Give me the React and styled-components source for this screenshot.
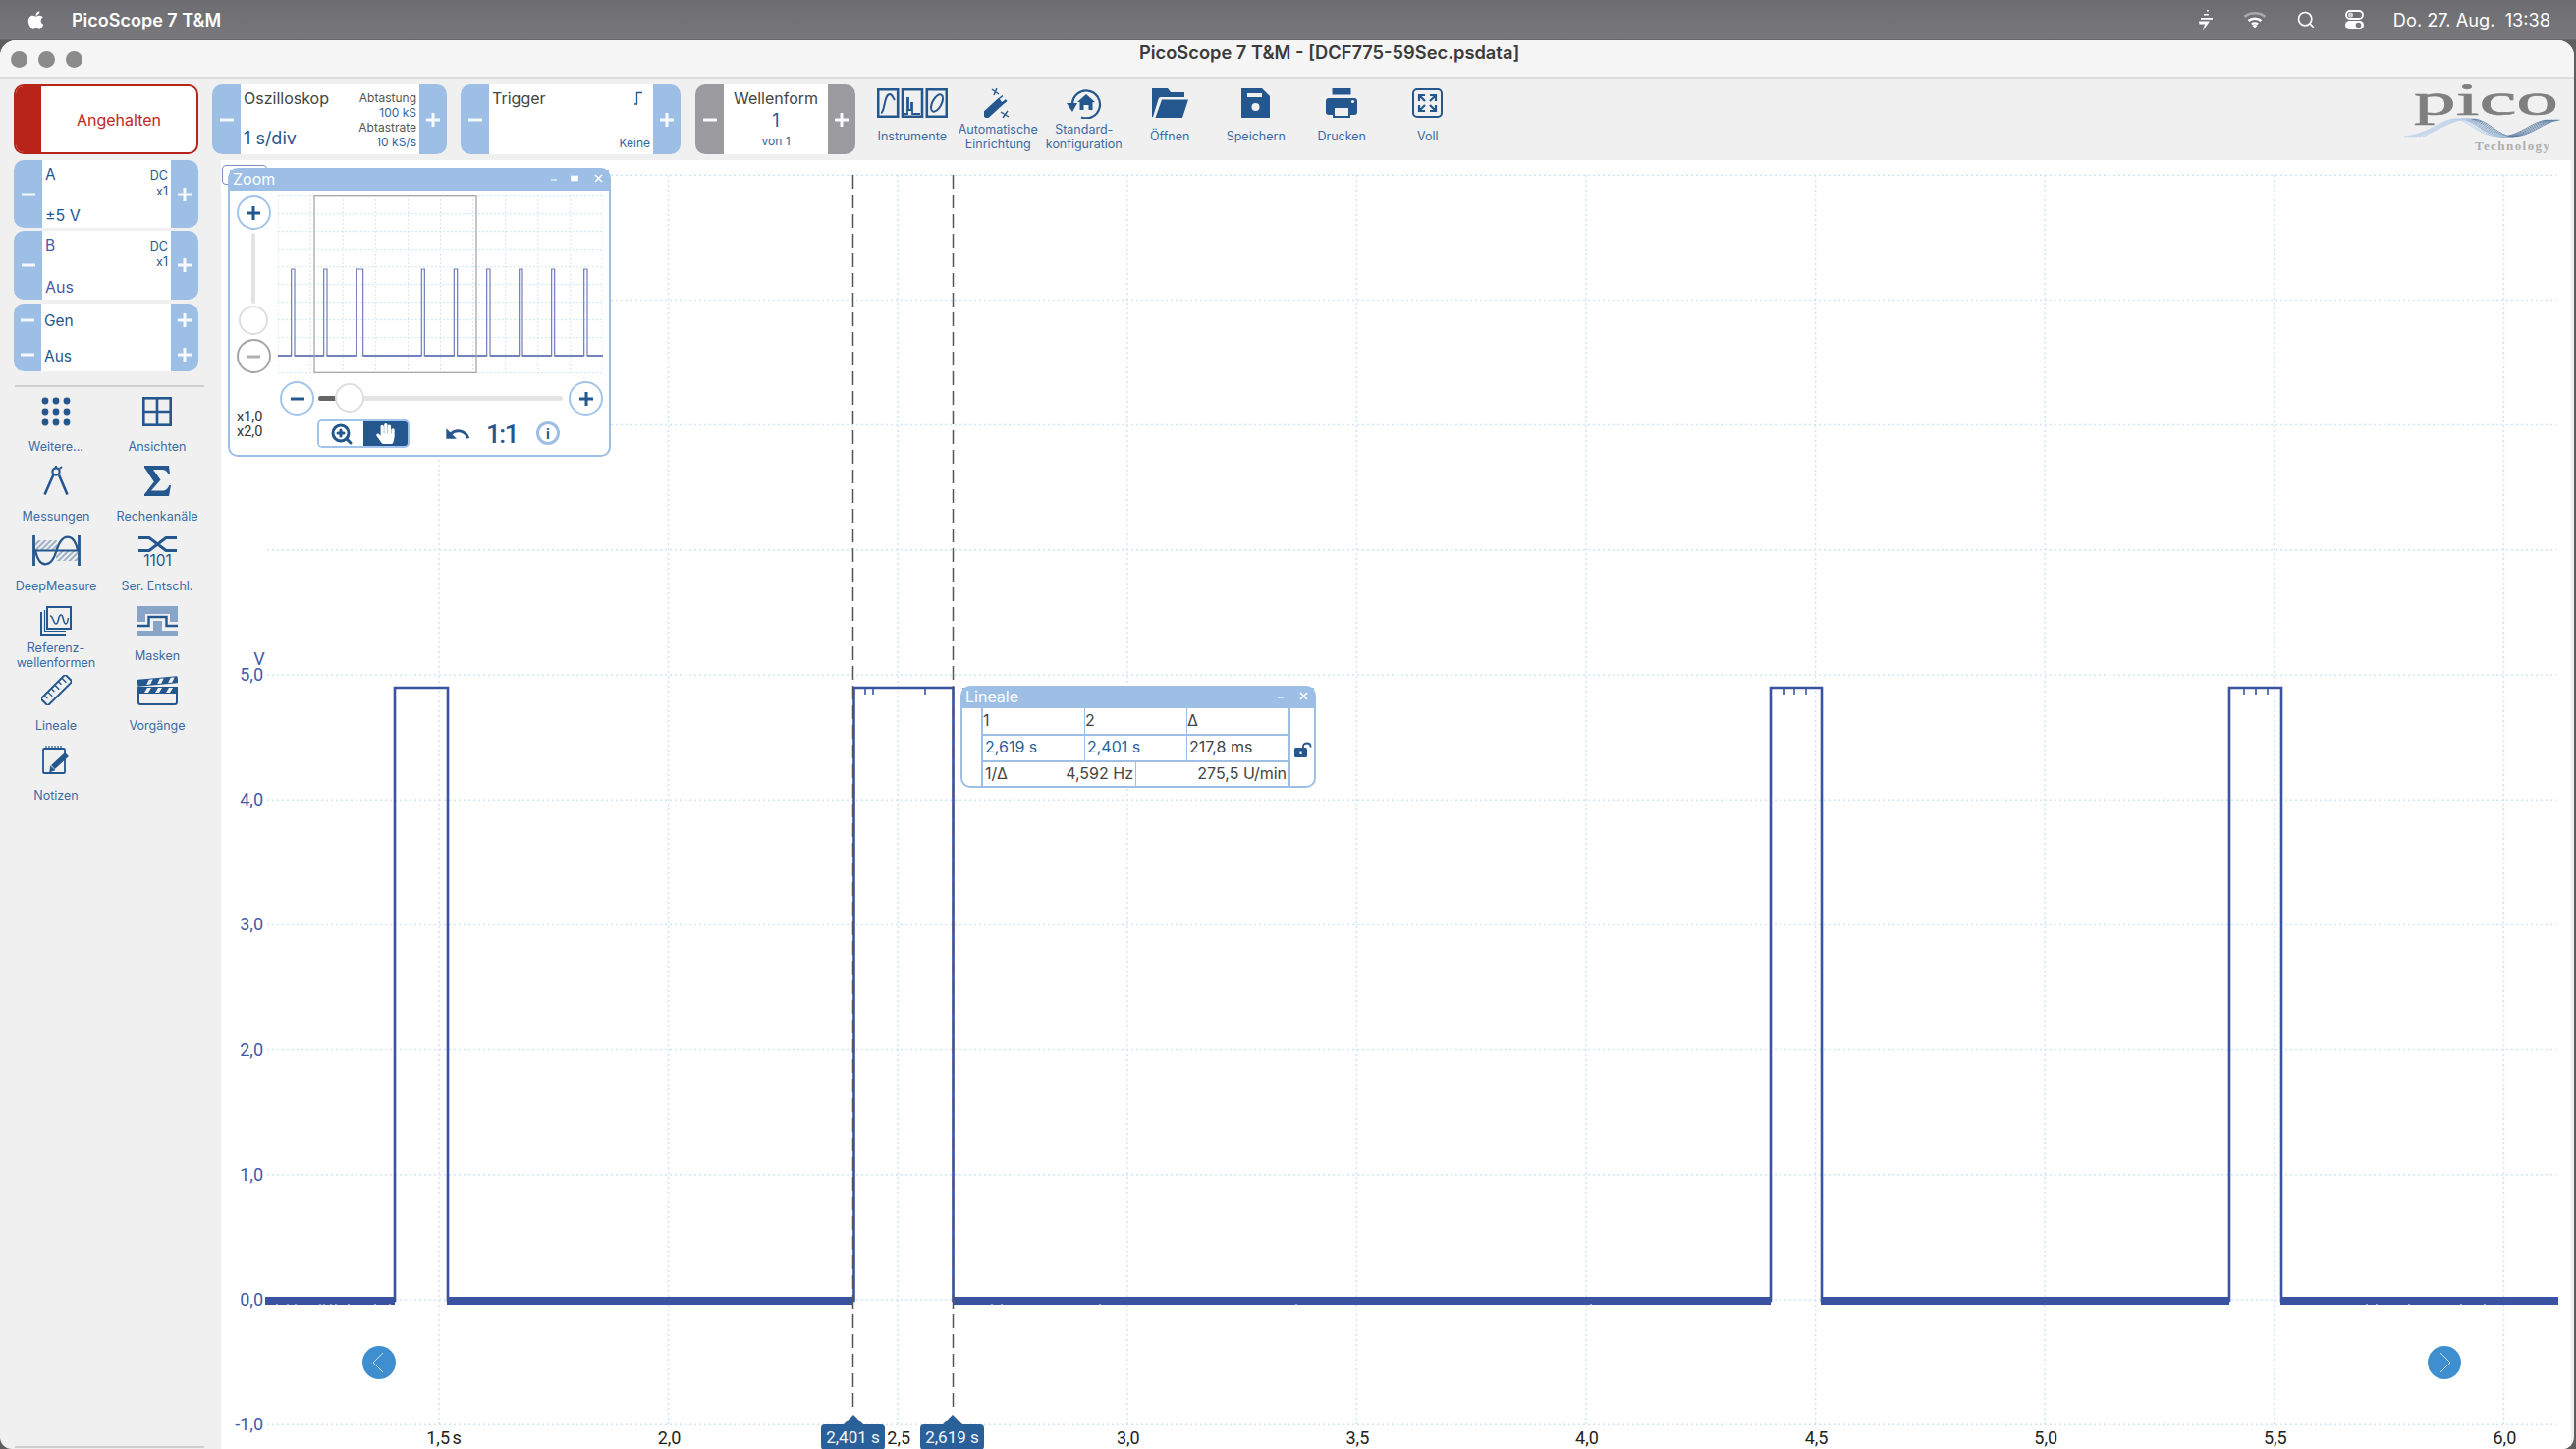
import styled, { createGlobalStyle } from 'styled-components';
import { FaApple, FaHandPaper } from 'react-icons/fa';
import { MdUndo } from 'react-icons/md';
import { Search, ZoomIn } from 'lucide-react';

const INK = '#25578f';

const Global = createGlobalStyle`
   html, body { margin: 0; padding: 0; background: #6c6c70; overflow: hidden; }
   * { box-sizing: border-box; }
   body { font-family: Inter, "Liberation Sans", sans-serif; }
`;

/* icons */

const IconSvg = styled.svg`
   display: block;
   overflow: visible;
`;

const IconInstruments = () => (
   <svg width="72" height="30" viewBox="0 0 72 30" fill="none" stroke={INK}>
      <rect x="1.2" y="1.2" width="20" height="27.6" strokeWidth="2.6" />
      <path d="M4 25C8 25 7 6 13 6 16 6 16 10 18 12" strokeWidth="2" />
      <rect x="26" y="1.2" width="20" height="27.6" strokeWidth="2.6" />
      <path d="M28 26H31V10H32V22H35V15H36V26H44" strokeWidth="1.8" />
      <rect x="50.8" y="1.2" width="20" height="27.6" strokeWidth="2.6" />
      <ellipse cx="61" cy="15" rx="4.6" ry="9.5" transform="rotate(28 61 15)" strokeWidth="2" />
   </svg>
);

const IconWand = () => (
   <svg width="28" height="30" viewBox="0 0 28 30" fill="none" stroke={INK}>
      <path d="M3 26L15 15" strokeWidth="8" strokeLinecap="round" />
      <path d="M15 15L21 10" strokeWidth="8" />
      <path d="M17 12.5L21.5 9" strokeWidth="4" stroke="#f0f0f0" />
      <path d="M8 1L15 6M13 0L10 7M17 24L25 29M24 23L19 30" strokeWidth="1.4" />
   </svg>
);

const IconHomeReset = () => (
   <svg width="36" height="31" viewBox="0 0 36 31" fill="none">
      <path d="M15 29.5A14 14 0 1 0 6 16" stroke={INK} strokeWidth="2.2" />
      <path d="M0 15H11L6 24Z" fill={INK} />
      <path d="M20 6L29 14H26.5V22H22.5V17H17.5V22H13.5V14H11Z" fill={INK} />
   </svg>
);

const IconFolder = () => (
   <svg width="37" height="30" viewBox="0 0 37 30" fill={INK}>
      <path d="M0 0H16L19 4H33V9H9C7.5 9 7 10 6.5 11L1 29H0Z" />
      <path d="M10 11.5H37L31 30H3.5Z" />
   </svg>
);

const IconSave = () => (
   <svg width="29" height="30" viewBox="0 0 29 30">
      <path d="M0 0H21L29 8V30H0Z" fill={INK} />
      <rect x="6" y="5" width="15" height="4" fill="#f0f0f0" />
      <circle cx="14.5" cy="19" r="4" fill="#f0f0f0" />
   </svg>
);

const IconPrint = () => (
   <svg width="32" height="30" viewBox="0 0 32 30">
      <rect x="6.5" width="19" height="6.5" fill={INK} />
      <rect y="10" width="32" height="17" rx="3" fill={INK} />
      <rect x="8" y="19" width="16" height="10" fill="#f0f0f0" stroke={INK} strokeWidth="2" />
      <circle cx="27.5" cy="13.5" r="1.6" fill="#f0f0f0" />
   </svg>
);

const IconFull = () => (
   <svg width="31" height="30" viewBox="0 0 31 30" fill="none" stroke={INK}>
      <rect x="1" y="1" width="29" height="28" rx="4" strokeWidth="2" />
      <path d="M7 13V7H13M7 7L13 13M18 7H24V13M24 7L18 13M7 17V23H13M7 23L13 17M24 17V23H18M24 23L18 17" strokeWidth="2.2" />
   </svg>
);

const IconDots = () => (
   <svg width="30" height="30" viewBox="0 0 30 30" fill={INK}>
      {[4, 15, 26].map(y => [4, 15, 26].map(x => <circle key={`${x}-${y}`} cx={x} cy={y} r="3.4" />))}
   </svg>
);

const IconViews = () => (
   <svg width="30" height="30" viewBox="0 0 30 30" fill="none" stroke={INK} strokeWidth="2.6">
      <rect x="1.3" y="1.3" width="27.4" height="27.4" />
      <path d="M15 1V29M1 15H29" />
   </svg>
);

const IconCompass = () => (
   <svg width="26" height="31" viewBox="0 0 26 31" fill="none" stroke={INK}>
      <circle cx="13" cy="6" r="3.6" strokeWidth="2.2" />
      <path d="M13 0V3M16.5 3L19 1" strokeWidth="2" />
      <path d="M10.5 9L1.5 29.5M16 9.5L24.5 29.5" strokeWidth="2.6" />
   </svg>
);

const IconSigma = () => (
   <svg width="27" height="31" viewBox="0 0 27 31" fill={INK}>
      <path d="M0 0H25L26 9H24.5C23 5 21 4 17 4H9L16.5 14.5L7 25.5H18C22 25.5 24 23.5 25.3 20H27L25 31H0V29.2L9.8 16.4L0 1.8Z" />
   </svg>
);

const IconDeep = () => (
   <svg width="49" height="31" viewBox="0 0 49 31" fill="none">
      <defs>
         <pattern id="hatch" width="4" height="4" patternUnits="userSpaceOnUse" patternTransform="rotate(45)">
            <rect width="2" height="4" fill="#9fb0c6" />
         </pattern>
      </defs>
      <rect x="3" y="5" width="22" height="10" fill="url(#hatch)" />
      <rect x="24" y="16" width="22" height="10" fill="url(#hatch)" />
      <path d="M1.5 0V31M47.5 0V31" stroke={INK} strokeWidth="2.8" />
      <path d="M2 15.5H47" stroke={INK} strokeWidth="2" />
      <path d="M3 15C7 34 19 34 24.5 15.5S42 -3 46 15" stroke={INK} strokeWidth="2.2" />
   </svg>
);

const IconDecode = () => (
   <IconSvg width="39" height="31" viewBox="0 0 39 31" fill="none">
      <path d="M0 2.5H11L28 15.5H39M0 15.5H11L28 2.5H39" stroke={INK} strokeWidth="3" />
      <text x="19.5" y="31" textAnchor="middle" fontFamily="Inter" fontSize="15.5" fill={INK}>1101</text>
   </IconSvg>
);

const IconRefs = () => (
   <svg width="32" height="30" viewBox="0 0 32 30" fill="none" stroke={INK}>
      <rect x="7" y="1" width="24" height="22" strokeWidth="2" />
      <path d="M1 6V29H26" strokeWidth="2" />
      <path d="M4.5 4V25.5H26" strokeWidth="1.2" />
      <path d="M10 10C13 9 13 18 16 18 19 18 18 9 21 9 24 9 23 18 26 18 27.5 18 28 15 28.5 12" strokeWidth="1.5" />
   </svg>
);

const IconMask = () => (
   <svg width="41" height="30" viewBox="0 0 41 30" fill="none">
      <path d="M0 0H41V16H33V8H8V16H0Z" fill="#88a5c8" />
      <path d="M0 25H16V15H25V25H41V30H0Z" fill="#88a5c8" />
      <path d="M0 20H11.5V11H29.5V20H41" stroke={INK} strokeWidth="2.4" />
      <path d="M0 23H14V14H27V23H41" stroke="#f0f0f0" strokeWidth="1" />
   </svg>
);

const IconRuler = () => (
   <svg width="31" height="31" viewBox="0 0 31 31" fill="none" stroke={INK}>
      <g transform="rotate(-45 15.5 15.5)">
         <rect x="-2" y="10.5" width="35" height="10" strokeWidth="2" />
         <path d="M3 11V15M8 11V17M13 11V15M18 11V17M23 11V15M28 11V17" strokeWidth="1.4" />
      </g>
   </svg>
);

const IconClapper = () => (
   <svg width="41" height="30" viewBox="0 0 41 30">
      <g transform="rotate(-5 20 6)">
         <rect x="0" y="2" width="41" height="7" rx="1" fill={INK} />
         <path d="M9 8L12 3H16L13 8ZM20 8L23 3H27L24 8ZM31 8L34 3H38L35 8Z" fill="#f0f0f0" />
      </g>
      <rect x="1" y="12" width="39" height="17" rx="2" fill="#f0f0f0" stroke={INK} strokeWidth="2" />
      <rect y="11" width="41" height="7" fill={INK} />
      <path d="M7 17L10 12H14L11 17ZM18 17L21 12H25L22 17ZM29 17L32 12H36L33 17Z" fill="#f0f0f0" />
   </svg>
);

const IconNotes = () => (
   <svg width="28" height="30" viewBox="0 0 28 30" fill="none" stroke={INK}>
      <rect x="1" y="3" width="22" height="25" rx="1" strokeWidth="1.8" />
      <path d="M4 0V3.5M7 0V3.5M10 0V3.5M13 0V3.5M16 0V3.5M19 0V3.5" strokeWidth="1.2" />
      <path d="M11 22L25 9" strokeWidth="5.5" />
      <path d="M7.5 27L8.5 21L13 25Z" fill={INK} strokeWidth="0.6" />
   </svg>
);

const IconBolt = () => (
   <svg width="16" height="23" viewBox="0 0 16 23" fill="#fff">
      <rect x="9" y="1" width="2" height="1.5" />
      <rect x="6" y="5" width="5" height="1.5" />
      <rect x="3" y="9" width="12" height="1.8" />
      <path d="M1 12.5H12L5 22.5L7 15.5H1.5Z" />
   </svg>
);

const IconWifi = () => (
   <svg width="24" height="18" viewBox="0 0 24 18" fill="none" strokeWidth="2.6">
      <path d="M1.5 6C7 1 17 1 22.5 6" stroke="#a9a9ad" />
      <path d="M5.5 10C9 7 15 7 18.5 10" stroke="#fff" />
      <path d="M9 13.5C10.6 12.2 13.4 12.2 15 13.5" stroke="#fff" />
      <path d="M9.5 15L12 17.5L14.5 15L12 13.5Z" fill="#fff" />
   </svg>
);

const IconControls = () => (
   <svg width="19" height="20" viewBox="0 0 19 20">
      <rect x="1" y="1" width="17" height="8" rx="4" fill="none" stroke="#fff" strokeWidth="1.8" />
      <circle cx="5.5" cy="5" r="2.6" fill="#cfcfd2" />
      <rect y="11" width="19" height="9" rx="4.5" fill="#fff" />
      <circle cx="13.5" cy="15.5" r="2.8" fill="#77777b" />
   </svg>
);

const IconEdge = () => (
   <svg width="10" height="14" viewBox="0 0 10 14" fill="none" stroke={INK} strokeWidth="1.3">
      <path d="M1 13H3.5V1.5H9" />
   </svg>
);

const IconLock = () => (
   <svg width="18" height="16" viewBox="0 0 18 16" fill="none">
      <rect y="6" width="13" height="10" rx="1.5" fill={INK} />
      <rect x="5.5" y="9.5" width="2" height="3.5" fill="#fff" />
      <path d="M9 6V4.5C9 0.5 16.5 0.5 16.5 4.5V5.5" stroke={INK} strokeWidth="1.8" />
   </svg>
);

const PicoLogo = () => (
   <IconSvg width="170" height="74" viewBox="0 0 170 74" fill="none">
      <text x="10" y="32" textLength="147" lengthAdjust="spacingAndGlyphs" fontFamily="Liberation Serif" fontSize="46" fill="#7f7f7f" stroke="#7f7f7f" strokeWidth="0.6">pico</text>
      {[0, 2.5, 5, 7.5, 10, 12.5].map(o => (
         <g key={o}>
            <path d={`M${o * 1.5} 54C25 52 ${38 + o} 36 ${52 + o} 36C${64 + o} 36 ${76 + o} 54 ${96 + o} 54`} stroke="#b9cfe8" strokeWidth="0.8" />
            <path d={`M${58 + o} 36C${72 + o} 36 ${84 + o} 54 ${98 + o} 54C${118 + o} 54 ${130 + o} 38 ${146 + o} 37`} stroke="#55799f" strokeWidth="0.8" />
         </g>
      ))}
      <text x="72" y="68" textLength="76" fontFamily="Liberation Serif" fontWeight="700" fontSize="13" fill="#adadad">Technology</text>
   </IconSvg>
);

/* menu + title */

const Page = styled.div`
   width: 2623px;
   height: 1475px;
   display: flex;
   flex-direction: column;
   overflow: hidden;
   background: #5f5f62;
`;

const MenuBar = styled.div`
   height: 41px;
   flex: none;
   display: flex;
   align-items: center;
   padding: 0 26px 0 26px;
   color: #fff;
   background: linear-gradient(#6d6d71, #79797d);
   border-bottom: 1px solid #66666a;
`;

const AppName = styled.span`
   margin-left: 26px;
   font-size: 18px;
   font-weight: 600;
`;

const MenuRight = styled.div`
   margin-left: auto;
   display: flex;
   align-items: center;
   gap: 30px;
`;

const Clock = styled.span`
   font-size: 18.2px;
   white-space: pre;
`;

const Window = styled.div`
   flex: 1;
   width: 2621px;
   display: flex;
   flex-direction: column;
   min-height: 0;
   background: #f0f0f0;
   border-radius: 16px 16px 12px 12px;
   overflow: hidden;
`;

const TitleBar = styled.div`
   height: 39px;
   flex: none;
   display: flex;
   align-items: flex-start;
   padding: 2px 0 0 11px;
   background: #f5f5f5;
   border-bottom: 2px solid #dcdcdc;
`;

const Lights = styled.div`
   display: flex;
   gap: 11px;
   margin-top: 9px;
`;

const Light = styled.span`
   width: 17px;
   height: 17px;
   border-radius: 50%;
   background: #8b8b8b;
`;

const Title = styled.div`
   margin-left: 1076px;
   font-size: 18.3px;
   font-weight: 600;
   color: #3b3b3b;
   line-height: 20px;
`;

/* toolbar */

const Toolbar = styled.div`
   height: 83px;
   flex: none;
   display: flex;
   align-items: center;
   padding: 0 14px;
`;

const RunButton = styled.div`
   width: 188px;
   height: 71px;
   flex: none;
   display: flex;
   margin-right: 14px;
   background: #fff;
   border: 2px solid #b8241a;
   border-radius: 10px;
   overflow: hidden;
`;

const RunBar = styled.div`
   width: 26px;
   background: #b8241a;
`;

const RunText = styled.div`
   flex: 1;
   display: flex;
   align-items: center;
   justify-content: center;
   font-size: 16px;
   color: #c0281e;
`;

const Stepper = styled.div`
   width: ${p => p.$w}px;
   height: ${p => p.$h || 71}px;
   flex: none;
   display: grid;
   grid-template-columns: 29px 1fr 28px;
   margin-right: ${p => p.$mr || 0}px;
   margin-top: ${p => p.$mt || 0}px;
   background: #fff;
   border-radius: 10px;
   overflow: hidden;
`;

const StepBtn = styled.div`
   position: relative;
   background: ${p => (p.$gray ? '#9b9b9f' : '#9dbfe6')};

   &::before {
      content: '';
      position: absolute;
      left: 50%;
      top: 50%;
      width: 14px;
      height: 3px;
      transform: translate(-50%, -50%);
      background: #f6f9fd;
   }

   &::after {
      content: '';
      position: absolute;
      left: 50%;
      top: 50%;
      width: 3px;
      height: 14px;
      transform: translate(-50%, -50%);
      background: #f6f9fd;
      display: ${p => (p.$plus ? 'block' : 'none')};
   }
`;

const PanelBody = styled.div`
   display: flex;
   justify-content: space-between;
   padding: 5px 3px 4px 3px;
   min-width: 0;
`;

const PanelCol = styled.div`
   display: flex;
   flex-direction: column;
   justify-content: space-between;
   align-items: ${p => (p.$end ? 'flex-end' : 'flex-start')};
`;

const PanelCaption = styled.span`
   font-size: 16px;
   line-height: 19px;
   color: #444;
`;

const PanelValue = styled.span`
   font-size: 18px;
   line-height: 24px;
   color: ${INK};
`;

const SmallStack = styled.div`
   display: flex;
   flex-direction: column;
   align-items: flex-end;
   padding-top: 1px;
   line-height: 15px;
`;

const SmallGray = styled.span`
   font-size: 12px;
   color: #555;
`;

const SmallBlue = styled.span`
   font-size: 12px;
   line-height: 15px;
   color: #2f65a3;
`;

const EdgeWrap = styled.div`
   margin-right: 7px;
`;

const CenterBody = styled.div`
   display: flex;
   flex-direction: column;
   align-items: center;
   padding-top: 5px;
`;

const WaveNo = styled.span`
   font-size: 18px;
   line-height: 26px;
   color: ${INK};
`;

const ToolItem = styled.div`
   width: 87.5px;
   flex: none;
   height: 71px;
   display: flex;
   flex-direction: column;
   align-items: center;
   padding-top: 4px;
`;

const ToolIcon = styled.div`
   height: 30px;
   display: flex;
   align-items: center;
   justify-content: center;
`;

const ToolLabel = styled.div`
   height: 37px;
   display: flex;
   align-items: center;
   text-align: center;
   white-space: pre-line;
   font-size: 12.5px;
   line-height: 15px;
   color: #3a6ba5;
`;

const LogoWrap = styled.div`
   margin-left: auto;
   margin-right: -11px;
   height: 74px;
`;

/* sidebar */

const Body = styled.div`
   flex: 1;
   min-height: 0;
   display: flex;
   padding-right: 3px;
`;

const Sidebar = styled.div`
   width: 225px;
   flex: none;
   display: flex;
   flex-direction: column;
   padding-left: 14px;
`;

const ChannelList = styled.div`
   display: flex;
   flex-direction: column;
`;

const ChannelText = styled.div`
   display: flex;
   justify-content: space-between;
   height: 100%;
   padding: 5px 3px 3px 3px;
   color: ${p => p.$color};
`;

const ChannelName = styled.span`
   font-size: 15.5px;
   line-height: 20px;
`;

const ChannelRange = styled.span`
   font-size: 16px;
   line-height: 20px;
`;

const CouplingStack = styled.div`
   display: flex;
   flex-direction: column;
   align-items: flex-end;
   padding-top: 3px;
   font-size: 12.5px;
   line-height: 16px;
   color: ${INK};
`;

const GenPanel = styled.div`
   width: 188px;
   height: 69px;
   margin-top: 4px;
   display: grid;
   grid-template-columns: 28px 1fr 28px;
   grid-template-rows: 1fr 1fr;
   background: #fff;
   border-radius: 10px;
   overflow: hidden;
`;

const GenText = styled.div`
   grid-column: 2;
   grid-row: 1 / span 2;
   display: flex;
   flex-direction: column;
   justify-content: space-between;
   padding: 8px 3px 5px 3px;
   font-size: 15.5px;
   line-height: 20px;
   color: ${INK};
`;

const Separator = styled.div`
   width: 193px;
   height: 2px;
   margin: ${p => p.$margin};
   margin-left: 1px;
   background: #cfcfcf;
   flex: none;
`;

const SideGrid = styled.div`
   margin-left: -8.5px;
   display: grid;
   grid-template-columns: 103px 103px;
   grid-auto-rows: 71px;
`;

const SideItem = styled.div`
   display: flex;
   flex-direction: column;
   align-items: center;
`;

const SideIcon = styled.div`
   height: 43px;
   display: flex;
   align-items: center;
   justify-content: center;
   flex: none;
`;

const SideLabel = styled.div`
   height: 28px;
   display: flex;
   align-items: center;
   text-align: center;
   white-space: pre-line;
   font-size: 12.5px;
   line-height: 15px;
   color: #3a6ba5;
`;

/* plot */

const Plot = styled.div`
   position: relative;
   flex: 1;
   background: #fff;
   overflow: hidden;
`;

const Chart = styled.svg`
   display: block;
   width: 2393px;
   height: 1312px;
`;

const AxisText = styled.text`
   font-family: Roboto, sans-serif;
   font-size: 18px;
   word-spacing: -2px;
   fill: ${p => p.$fill};
`;

const CursorTag = styled.div`
   position: absolute;
   left: ${p => p.$left}px;
   top: 1287px;
   width: 65px;
   height: 26px;
   display: flex;
   align-items: center;
   justify-content: center;
   background: #2a6099;
   border-radius: 4px;
   color: #f1f6fb;
   font-family: Roboto, sans-serif;
   font-size: 17px;

   &::before {
      content: '';
      position: absolute;
      left: 50%;
      top: -10px;
      margin-left: -10px;
      border-left: 10px solid transparent;
      border-right: 10px solid transparent;
      border-bottom: 10px solid #2a6099;
   }
`;

const NavButton = styled.div`
   position: absolute;
   left: ${p => p.$left}px;
   top: 1207px;
   width: 34px;
   height: 34px;
   display: flex;
   align-items: center;
   justify-content: center;
   border-radius: 50%;
   background: #3f8fd0;
`;

const BackTab = styled.div`
   position: absolute;
   left: 1px;
   top: 5px;
   width: 46px;
   height: 20px;
   border: 1px solid #7a8ec0;
   border-radius: 4px;
   background: #fff;
`;

const FloatWin = styled.div`
   position: absolute;
   left: ${p => p.$left}px;
   top: ${p => p.$top}px;
   width: ${p => p.$w}px;
   height: ${p => p.$h}px;
   display: flex;
   flex-direction: column;
   background: #fff;
   border: 2px solid #9dbfe6;
   border-radius: 10px;
`;

const WinHead = styled.div`
   height: 21px;
   flex: none;
   display: flex;
   align-items: center;
   justify-content: space-between;
   padding: 0 3px 3px 3px;
   background: #9dbfe6;
   color: #fff;
   font-size: 16px;
`;

const WinControls = styled.svg`
   display: block;
`;

const ZoomTop = styled.div`
   display: flex;
   gap: 8px;
   padding: 5px 0 0 7px;
`;

const VSlider = styled.div`
   position: relative;
   width: 34px;
   height: 181px;
   flex: none;
   display: flex;
   flex-direction: column;
   align-items: center;
   justify-content: space-between;
`;

const VTrack = styled.div`
   width: 4px;
   height: 72px;
   margin-top: -3px;
   margin-bottom: 30px;
   background: #e3e3e3;
   border-radius: 2px;
`;

const Thumb = styled.div`
   position: absolute;
   width: 30px;
   height: 30px;
   border-radius: 50%;
   border: 2px solid #dedede;
   background: #fff;
   left: ${p => p.$left}px;
   top: ${p => p.$top}px;
`;

const CircleBtn = styled.div`
   position: relative;
   width: 35px;
   height: 35px;
   flex: none;
   border-radius: 50%;
   background: #fff;
   border: 2px solid ${p => (p.$gray ? '#a5a5a5' : '#a3c4ea')};

   &::before {
      content: '';
      position: absolute;
      left: 50%;
      top: 50%;
      width: 14px;
      height: 3px;
      transform: translate(-50%, -50%);
      background: ${p => (p.$gray ? '#b0b0b0' : INK)};
   }

   &::after {
      content: '';
      position: absolute;
      left: 50%;
      top: 50%;
      width: 3px;
      height: 14px;
      transform: translate(-50%, -50%);
      background: ${INK};
      display: ${p => (p.$plus ? 'block' : 'none')};
   }
`;

const MiniPlot = styled.svg`
   display: block;
   width: 331px;
   height: 181px;
`;

const ZoomSliderRow = styled.div`
   display: flex;
   align-items: center;
   margin: 8px 0 0 51px;
`;

const HTrack = styled.div`
   position: relative;
   width: 249px;
   height: 5px;
   margin: 0 6px 0 4px;
   background: #e3e3e3;
   border-radius: 3px;

   &::before {
      content: '';
      position: absolute;
      left: 0;
      top: 0;
      width: 22px;
      height: 5px;
      border-radius: 3px;
      background: #666;
   }
`;

const ZoomTools = styled.div`
   display: flex;
   align-items: flex-start;
   margin-top: 4px;
   padding-left: 7px;
`;

const Factors = styled.div`
   width: 82px;
   margin-top: -10px;
   display: flex;
   flex-direction: column;
   font-family: Roboto, sans-serif;
   font-size: 14.5px;
   line-height: 15px;
   color: #333;
`;

const Segmented = styled.div`
   width: 94px;
   height: 29px;
   display: flex;
   border: 2px solid #a3c4ea;
   border-radius: 5px;
   overflow: hidden;
`;

const SegBtn = styled.div`
   flex: 1;
   display: flex;
   align-items: center;
   justify-content: center;
   background: ${p => (p.$on ? INK : '#fff')};
`;

const UndoWrap = styled.div`
   margin-left: 35px;
   height: 29px;
   display: flex;
   align-items: center;
`;

const OneToOne = styled.span`
   margin-left: 15px;
   height: 29px;
   display: flex;
   align-items: center;
   font-family: Roboto, sans-serif;
   font-weight: 500;
   font-size: 26px;
   letter-spacing: -1.5px;
   color: ${INK};
`;

const InfoBtn = styled.span`
   margin-left: 19px;
   margin-top: 2px;
   width: 24px;
   height: 24px;
   display: flex;
   align-items: center;
   justify-content: center;
   border: 3px solid #9dbfe6;
   border-radius: 50%;
   font-size: 14px;
   font-weight: 700;
   color: ${INK};
`;

const RulerBody = styled.div`
   flex: 1;
   display: flex;
   padding-left: 19px;
`;

const RulerTable = styled.div`
   width: 315px;
   display: flex;
   flex-direction: column;
   border-left: 2px solid #9dbfe6;
   border-right: 2px solid #9dbfe6;
`;

const RulerRow = styled.div`
   height: ${p => p.$h}px;
   display: flex;
   border-bottom: ${p => (p.$last ? 'none' : '2px solid #9dbfe6')};
`;

const RulerCell = styled.div`
   flex: 1;
   display: flex;
   align-items: center;
   justify-content: ${p => (p.$between ? 'space-between' : p.$right ? 'flex-end' : 'flex-start')};
   padding: 0 ${p => (p.$tight ? 0 : 2)}px 3px ${p => (p.$tight ? 0 : 2)}px;
   font-size: 16px;
   color: ${p => (p.$blue ? '#2a5f9a' : '#444')};
   border-left: ${p => (p.$first ? 'none' : '1.5px solid #9dbfe6')};
   white-space: nowrap;
`;

const LockCell = styled.div`
   flex: 1;
   display: flex;
   align-items: center;
   justify-content: flex-end;
   padding: 4px 2px 0 0;
`;

/* data */

const TOOLS = [
   { label: 'Instrumente', icon: <IconInstruments /> },
   { label: 'Automatische\nEinrichtung', icon: <IconWand /> },
   { label: 'Standard-\nkonfiguration', icon: <IconHomeReset /> },
   { label: 'Öffnen', icon: <IconFolder /> },
   { label: 'Speichern', icon: <IconSave /> },
   { label: 'Drucken', icon: <IconPrint /> },
   { label: 'Voll', icon: <IconFull /> },
];

const SIDE_ITEMS = [
   { label: 'Weitere...', icon: <IconDots /> },
   { label: 'Ansichten', icon: <IconViews /> },
   { label: 'Messungen', icon: <IconCompass /> },
   { label: 'Rechenkanäle', icon: <IconSigma /> },
   { label: 'DeepMeasure', icon: <IconDeep /> },
   { label: 'Ser. Entschl.', icon: <IconDecode /> },
   { label: 'Referenz-\nwellenformen', icon: <IconRefs /> },
   { label: 'Masken', icon: <IconMask /> },
   { label: 'Lineale', icon: <IconRuler /> },
   { label: 'Vorgänge', icon: <IconClapper /> },
   { label: 'Notizen', icon: <IconNotes /> },
];

const X_TICKS = ['1,5 s', '2,0', '2,5', '3,0', '3,5', '4,0', '4,5', '5,0', '5,5', '6,0'];
const Y_TICKS = [5, 4, 3, 2, 1, 0, -1];
const PULSES = [[402, 456], [869.5, 970.5], [1803, 1855], [2270, 2323]];
const PULSE_TICKS = [881, 889, 942, 1817, 1827, 1839, 2285, 2297, 2309];
const BASE_SPECKS = [282, 293, 301, 326, 330, 337, 342, 355, 382, 397, 1010, 1020, 1120, 1320, 1620, 2410, 2420, 2453, 2506, 2530];
const MINI_PULSES = [[216, 226], [315, 325], [416, 435], [614, 623], [713, 723], [813, 823], [912, 922], [1011, 1020], [1110, 1120]];

const xAt = i => 447 + i * 233.6;
const yAt = v => 1323 - 127.2 * v;

const wavePath = () => {
   let d = 'M270 1324';
   PULSES.forEach(([a, b]) => {
      d += `H${a}V700H${b}V1324`;
   });
   return `${d}H2605`;
};

function ScopeChart() {
   return (
      <Chart viewBox="225 163 2393 1312" fill="none">
         <g stroke="#cfe6f2" strokeWidth="1.5" strokeDasharray="2 3">
            {[-1, 0, 1, 2, 3, 4, 5, 6, 7, 8, 9].map(v => <path key={v} d={`M272 ${yAt(v)}H2603`} />)}
            {X_TICKS.map((t, i) => <path key={t} d={`M${xAt(i)} 178V1450`} />)}
         </g>
         <path d={wavePath()} stroke="#3a53a0" strokeWidth="2.6" />
         <path d="M270 1324H402M455 1324H869M970 1324H1803M1854 1324H2270M2322 1324H2605" stroke="#3a53a0" strokeWidth="8" />
         {PULSE_TICKS.map(x => <path key={x} d={`M${x} 700V707`} stroke="#3a53a0" strokeWidth="1.6" />)}
         {BASE_SPECKS.map(x => <path key={x} d={`M${x} 1327V1328`} stroke="#fff" strokeWidth="1" />)}
         <path d="M868.5 178V1438M970.5 178V1438" stroke="#555" strokeWidth="1.5" strokeDasharray="14 6" />
         {Y_TICKS.map(v => (
            <AxisText key={v} x="268" y={yAt(v) + 6} textAnchor="end" $fill="#3f5ba9">
               {v.toFixed(1).replace('.', ',')}
            </AxisText>
         ))}
         <AxisText x="264" y="677" textAnchor="middle" $fill="#3f5ba9">V</AxisText>
         {X_TICKS.map((t, i) => (
            <AxisText key={t} x={xAt(i) + (i === 0 ? 5 : 1)} y="1470" textAnchor="middle" $fill="#222">{t}</AxisText>
         ))}
      </Chart>
   );
}

function MiniChart() {
   let d = 'M175 591';
   MINI_PULSES.forEach(([a, b]) => {
      d += `H${a}V327H${b}V591`;
   });
   d += 'H1168';
   return (
      <MiniPlot viewBox="175 102 993 543" fill="none">
         <g stroke="#c3e2f0" strokeWidth="3" strokeDasharray="5 7">
            {[0, 1, 2, 3, 4, 5, 6, 7, 8, 9, 10].map(i => <path key={i} d={`M${175 + i * 99.3} 102V645`} />)}
            {[0, 1, 2, 3, 4, 5, 6, 7, 8, 9, 10].map(i => <path key={i} d={`M175 ${104 + i * 54}H1168`} />)}
         </g>
         <path d={d} stroke="#6a7abc" strokeWidth="3.5" />
         <path d="M175 591H216M226 591H315M325 591H416M435 591H614M623 591H713M723 591H813M823 591H912M922 591H1011M1020 591H1110M1120 591H1168" stroke="#5f70b2" strokeWidth="5" />
         <rect x="286" y="104" width="495" height="539" stroke="#a9a9a9" strokeWidth="4" />
      </MiniPlot>
   );
}

function HeadControls({ square }) {
   return (
      <WinControls width={square ? 56 : 34} height="12" viewBox={square ? '0 0 56 12' : '0 0 34 12'} fill="none" stroke="#fff" strokeWidth="1.6">
         <path d="M0 7H6" strokeOpacity="0.7" />
         {square && <rect x="21" y="3.5" width="6" height="4" fill="#fff" />}
         <path d={square ? 'M45 2L52 9M52 2L45 9' : 'M23 2L30 9M30 2L23 9'} />
      </WinControls>
   );
}

export default function App() {
   return (
      <Page>
         <Global />
         <MenuBar>
            <FaApple size={21} />
            <AppName>PicoScope 7 T&amp;M</AppName>
            <MenuRight>
               <IconBolt />
               <IconWifi />
               <Search size={20} strokeWidth={2} />
               <IconControls />
               <Clock>Do. 27. Aug.  13:38</Clock>
            </MenuRight>
         </MenuBar>
         <Window>
            <TitleBar>
               <Lights><Light /><Light /><Light /></Lights>
               <Title>PicoScope 7 T&amp;M - [DCF775-59Sec.psdata]</Title>
            </TitleBar>
            <Toolbar>
               <RunButton>
                  <RunBar />
                  <RunText>Angehalten</RunText>
               </RunButton>
               <Stepper $w={239} $mr={14}>
                  <StepBtn />
                  <PanelBody>
                     <PanelCol>
                        <PanelCaption>Oszilloskop</PanelCaption>
                        <PanelValue>1 s/div</PanelValue>
                     </PanelCol>
                     <SmallStack>
                        <SmallGray>Abtastung</SmallGray>
                        <SmallBlue>100 kS</SmallBlue>
                        <SmallGray>Abtastrate</SmallGray>
                        <SmallBlue>10 kS/s</SmallBlue>
                     </SmallStack>
                  </PanelBody>
                  <StepBtn $plus />
               </Stepper>
               <Stepper $w={224} $mr={15}>
                  <StepBtn />
                  <PanelBody>
                     <PanelCol><PanelCaption>Trigger</PanelCaption></PanelCol>
                     <PanelCol $end>
                        <EdgeWrap><IconEdge /></EdgeWrap>
                        <SmallBlue>Keine</SmallBlue>
                     </PanelCol>
                  </PanelBody>
                  <StepBtn $plus />
               </Stepper>
               <Stepper $w={163} $mr={14}>
                  <StepBtn $gray />
                  <CenterBody>
                     <PanelCaption>Wellenform</PanelCaption>
                     <WaveNo>1</WaveNo>
                     <SmallBlue>von 1</SmallBlue>
                  </CenterBody>
                  <StepBtn $gray $plus />
               </Stepper>
               {TOOLS.map(t => (
                  <ToolItem key={t.label}>
                     <ToolIcon>{t.icon}</ToolIcon>
                     <ToolLabel>{t.label}</ToolLabel>
                  </ToolItem>
               ))}
               <LogoWrap><PicoLogo /></LogoWrap>
            </Toolbar>
            <Body>
               <Sidebar>
                  <ChannelList>
                     <Stepper $w={188} $h={69}>
                        <StepBtn />
                        <ChannelText $color={INK}>
                           <PanelCol>
                              <ChannelName>A</ChannelName>
                              <ChannelRange>±5 V</ChannelRange>
                           </PanelCol>
                           <CouplingStack><span>DC</span><span>x1</span></CouplingStack>
                        </ChannelText>
                        <StepBtn $plus />
                     </Stepper>
                     <Stepper $w={188} $h={70} $mt={3}>
                        <StepBtn />
                        <ChannelText $color="#4a5ba5">
                           <PanelCol>
                              <ChannelName>B</ChannelName>
                              <ChannelRange>Aus</ChannelRange>
                           </PanelCol>
                           <CouplingStack><span>DC</span><span>x1</span></CouplingStack>
                        </ChannelText>
                        <StepBtn $plus />
                     </Stepper>
                     <GenPanel>
                        <StepBtn />
                        <GenText><span>Gen</span><span>Aus</span></GenText>
                        <StepBtn $plus />
                        <StepBtn />
                        <StepBtn $plus />
                     </GenPanel>
                  </ChannelList>
                  <Separator $margin="14px 0 3px" />
                  <SideGrid>
                     {SIDE_ITEMS.map(s => (
                        <SideItem key={s.label}>
                           <SideIcon>{s.icon}</SideIcon>
                           <SideLabel>{s.label}</SideLabel>
                        </SideItem>
                     ))}
                  </SideGrid>
                  <Separator $margin="auto 0 1px" />
               </Sidebar>
               <Plot>
                  <ScopeChart />
                  <BackTab />
                  <FloatWin $left={7} $top={8} $w={390} $h={294}>
                     <WinHead>
                        <span>Zoom</span>
                        <HeadControls square />
                     </WinHead>
                     <ZoomTop>
                        <VSlider>
                           <CircleBtn $plus />
                           <VTrack />
                           <Thumb $left={2} $top={112} />
                           <CircleBtn $gray />
                        </VSlider>
                        <MiniChart />
                     </ZoomTop>
                     <ZoomSliderRow>
                        <CircleBtn />
                        <HTrack>
                           <Thumb $left={17} $top={-13} />
                        </HTrack>
                        <CircleBtn $plus />
                     </ZoomSliderRow>
                     <ZoomTools>
                        <Factors><span>x1,0</span><span>x2,0</span></Factors>
                        <Segmented>
                           <SegBtn><ZoomIn size={24} color={INK} strokeWidth={3} /></SegBtn>
                           <SegBtn $on><FaHandPaper size={21} color="#fff" /></SegBtn>
                        </Segmented>
                        <UndoWrap><MdUndo size={28} color={INK} /></UndoWrap>
                        <OneToOne>1:1</OneToOne>
                        <InfoBtn>i</InfoBtn>
                     </ZoomTools>
                  </FloatWin>
                  <FloatWin $left={753} $top={535} $w={362} $h={104}>
                     <WinHead>
                        <span>Lineale</span>
                        <HeadControls />
                     </WinHead>
                     <RulerBody>
                        <RulerTable>
                           <RulerRow $h={28}>
                              <RulerCell $first $tight>1</RulerCell>
                              <RulerCell $tight>2</RulerCell>
                              <RulerCell $tight>Δ</RulerCell>
                           </RulerRow>
                           <RulerRow $h={27}>
                              <RulerCell $first $blue>2,619 s</RulerCell>
                              <RulerCell $blue>2,401 s</RulerCell>
                              <RulerCell>217,8 ms</RulerCell>
                           </RulerRow>
                           <RulerRow $h={24} $last>
                              <RulerCell $first $between><span>1/Δ</span><span>4,592 Hz</span></RulerCell>
                              <RulerCell $right>275,5 U/min</RulerCell>
                           </RulerRow>
                        </RulerTable>
                        <LockCell><IconLock /></LockCell>
                     </RulerBody>
                  </FloatWin>
                  <CursorTag $left={611}>2,401 s</CursorTag>
                  <CursorTag $left={712}>2,619 s</CursorTag>
                  <NavButton $left={144}>
                     <svg width="14" height="22" viewBox="0 0 14 22" fill="none" stroke="#cfe3f5" strokeWidth="1"><path d="M11 1L1 11L11 21" /></svg>
                  </NavButton>
                  <NavButton $left={2247}>
                     <svg width="14" height="22" viewBox="0 0 14 22" fill="none" stroke="#cfe3f5" strokeWidth="1"><path d="M3 1L13 11L3 21" /></svg>
                  </NavButton>
               </Plot>
            </Body>
         </Window>
      </Page>
   );
}
